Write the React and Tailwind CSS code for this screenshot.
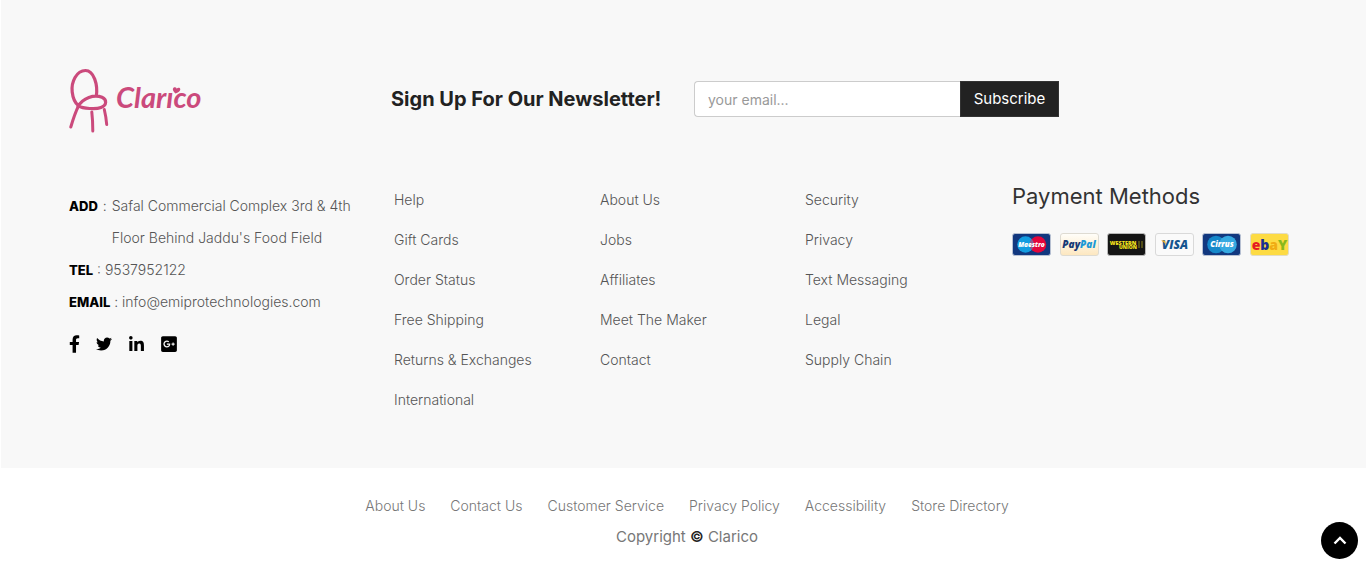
import React from 'react';
import { FaFacebookF, FaTwitter, FaLinkedinIn, FaGooglePlusSquare } from 'react-icons/fa';

const columns = [
  ['Help', 'Gift Cards', 'Order Status', 'Free Shipping', 'Returns & Exchanges', 'International'],
  ['About Us', 'Jobs', 'Affiliates', 'Meet The Maker', 'Contact'],
  ['Security', 'Privacy', 'Text Messaging', 'Legal', 'Supply Chain'],
];

const bottomLinks = ['About Us', 'Contact Us', 'Customer Service', 'Privacy Policy', 'Accessibility', 'Store Directory'];

const socials = [
  { label: 'Facebook', Icon: FaFacebookF, size: 'h-[18px] w-[11px]' },
  { label: 'Twitter', Icon: FaTwitter, size: 'h-4 w-4' },
  { label: 'LinkedIn', Icon: FaLinkedinIn, size: 'h-[17px] w-[17px]' },
  { label: 'Google Plus', Icon: FaGooglePlusSquare, size: 'h-[18px] w-4' },
];

function Logo() {
  return (
    <svg viewBox="0 0 136 66" className="h-[66px] w-[136px]" role="img" aria-label="Clarico">
      <g fill="none" stroke="#cb4a7c" strokeLinecap="round" strokeLinejoin="round">
        <path strokeWidth="3.200" d="M27.300 28C29 17 25 2.500 16.500 2.500C7.500 2.500 2 14 3.200 24C4 31 6 35 9.500 37.800C14 40.800 27 41.500 32 39.500C38 37 38 31.500 33 29.300C25 26 14 30 9 38.500" />
        <path strokeWidth="3" d="M9.500 38C6.500 44 4 51.500 1.800 59" />
        <path strokeWidth="3" d="M22.800 44C23.500 50 23.800 57 23.800 63" />
        <path strokeWidth="3" d="M35.300 41.500C36.500 46.500 37.300 51.500 37.700 56.500" />
      </g>
      <text x="47" y="40" fill="#cb4a7c" fontSize="29" fontWeight="700" fontStyle="italic" fontFamily="Lato, cursive">Clarıco</text>
      <path fill="#cb4a7c" d="M106.500 25.500C103.500 23 103 20 105.500 19.300C107 19 107.500 20 107.700 20.800C108.500 19.500 111 19.300 111.300 21.200C111.500 23 109 24.500 106.500 25.500Z" />
    </svg>
  );
}

const cardText = { fontFamily: '"Open Sans", sans-serif', fontStyle: 'italic', fontWeight: 800, textAnchor: 'middle' };

function Card({ name, fill, border, children }) {
  return (
    <svg viewBox="0 0 39 23" className="h-[23px] w-[39px]" role="img" aria-label={name}>
      <rect x="0.500" y="0.500" width="38" height="22" rx="2.500" fill={fill} stroke={border} />
      {children}
    </svg>
  );
}

function PaymentCards() {
  return (
    <div className="flex w-[277px] justify-between">
      <Card name="Maestro" fill="#12387f" border="#b7c0d2">
        <circle cx="13.500" cy="11.500" r="8.300" fill="#139ce0" />
        <circle cx="26" cy="11.500" r="8.300" fill="#e3063b" />
        <path d="M19.800 6A8.300 8.300 0 0 1 19.800 17A8.300 8.300 0 0 1 19.800 6Z" fill="#8b5d92" />
        <text x="19.500" y="14" fontSize="6.500" fill="#fff" {...cardText}>Maestro</text>
      </Card>
      <Card name="PayPal" fill="url(#cream)" border="#dedbd2">
        <defs>
          <linearGradient id="cream" x1="0" y1="0" x2="0" y2="1">
            <stop offset="0" stopColor="#fffefa" />
            <stop offset="1" stopColor="#fde7bf" />
          </linearGradient>
        </defs>
        <text x="19" y="15" fontSize="10" {...cardText}>
          <tspan fill="#173a76">Pay</tspan><tspan fill="#1c99d6">Pal</tspan>
        </text>
      </Card>
      <Card name="Western Union" fill="#151515" border="#b9b9b9">
        <g fill="#f5e31b" fontFamily="Open Sans, sans-serif" fontWeight="800" textAnchor="middle">
          <text x="16" y="11.500" fontSize="5.500">WESTERN</text>
          <text x="21" y="16" fontSize="5">UNION</text>
        </g>
        <path d="M32 8V15M35 8V15" stroke="#8f861b" />
      </Card>
      <Card name="Visa" fill="#fafafa" border="#d9d9d9">
        <text x="20" y="16" fontSize="12" fill="#15558f" {...cardText}>VISA</text>
        <path d="M6 7.500H10L11 12Q9 8.500 6 7.500Z" fill="#e9aa27" />
      </Card>
      <Card name="Cirrus" fill="#12387f" border="#b7c0d2">
        <circle cx="14" cy="11.500" r="8.800" fill="#1588ca" />
        <circle cx="26" cy="11.500" r="8.800" fill="#35a9e1" />
        <text x="20" y="14.300" fontSize="8" fill="#fff" {...cardText}>Cirrus</text>
      </Card>
      <Card name="eBay" fill="#fddb43" border="#e2dcc4">
        <text x="19.500" y="17" fontSize="14" fontFamily="Open Sans, sans-serif" fontWeight="800" textAnchor="middle">
          <tspan fill="#e51b23">e</tspan><tspan fill="#1b2f91">b</tspan><tspan fill="#f0ac14">a</tspan><tspan fill="#88b81c">Y</tspan>
        </text>
      </Card>
    </div>
  );
}

export default function App() {
  return (
    <div className="bg-white font-[Inter,sans-serif] text-[#555]">
      <footer>
        <div className="ml-px bg-[#f8f8f8] pt-[68px] pr-[76px] pb-12 pl-[68px]">
          <div className="grid grid-cols-[322fr_899fr] items-start">
            <a href="#home"><Logo /></a>
            <form className="mt-[13px] flex items-center" onSubmit={(e) => e.preventDefault()}>
              <label htmlFor="email" className="w-[303px] shrink-0 text-[20px] leading-9 font-bold text-[#222]">
                Sign Up For Our Newsletter!
              </label>
              <input
                id="email"
                type="email"
                placeholder="your email..."
                className="h-9 w-[266px] rounded-l border border-r-0 border-[#ccc] bg-white px-[13px] text-[14px] outline-none placeholder:text-[#999]"
              />
              <button type="submit" className="h-9 w-[99px] border border-[#333] bg-[#222] text-[15px] text-white">
                Subscribe
              </button>
            </form>
          </div>

          <div className="mt-[46px] grid grid-cols-[325fr_206fr_205fr_207fr_278fr] text-[14px] font-light">
            <address className="pt-[10px] leading-8 not-italic">
              <div className="flex gap-[5px]">
                <b className="text-[13px] font-extrabold text-black">ADD</b>
                <span>:</span>
                <span>Safal Commercial Complex 3rd &amp; 4th<br />Floor Behind Jaddu's Food Field</span>
              </div>
              <div><b className="text-[13px] font-extrabold text-black">TEL</b> : 9537952122</div>
              <div><b className="text-[13px] font-extrabold text-black">EMAIL</b> : <a href="mailto:info@emiprotechnologies.com">info@emiprotechnologies.com</a></div>
              <div className="mt-[17px] flex items-center gap-4 text-black">
                {socials.map(({ label, Icon, size }) => (
                  <a key={label} href="#social" aria-label={label}><Icon className={size} /></a>
                ))}
              </div>
            </address>
            {columns.map((items) => (
              <ul key={items[0]} className="leading-10">
                {items.map((item) => <li key={item}><a href="#page">{item}</a></li>)}
              </ul>
            ))}
            <div>
              <h2 className="mb-[21px] text-[22px] leading-8 font-normal text-[#333]">Payment Methods</h2>
              <PaymentCards />
            </div>
          </div>
        </div>

        <div className="pt-[26px] pb-3 pl-2 text-center text-[#777]">
          <nav className="flex justify-center gap-[25px] text-[14px] leading-6 font-light">
            {bottomLinks.map((item) => <a key={item} href="#page">{item}</a>)}
          </nav>
          <p className="mt-[7px] text-[15px] leading-6">
            Copyright <b className="font-semibold text-[#222]">©</b> Clarico
          </p>
        </div>
      </footer>
      <button type="button" aria-label="Back to top" className="fixed right-2 bottom-4 grid h-[37px] w-[37px] place-items-center rounded-full bg-black">
        <svg viewBox="0 0 14 9" className="h-[9px] w-[14px]" fill="none" stroke="#fff" strokeWidth="2.400">
          <path d="M1.500 7.500L7 2L12.500 7.500" />
        </svg>
      </button>
    </div>
  );
}
